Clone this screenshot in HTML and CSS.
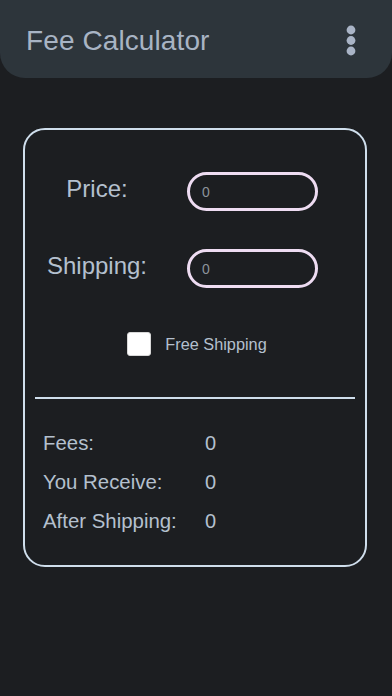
FILE: index.html
```html
<!DOCTYPE html>
<html>
<head>
<meta charset="utf-8">
<link rel="stylesheet" href="styles.css">
</head>
<body>
<header class="appbar">
  <h1 class="title">Fee Calculator</h1>
  <svg class="kebab" width="12" height="34" viewBox="0 0 12 34" aria-hidden="true">
    <circle cx="6" cy="6" r="4.4"/>
    <circle cx="6" cy="16.5" r="4.4"/>
    <circle cx="6" cy="27" r="4.4"/>
  </svg>
</header>
<main class="card">
  <div class="field-row">
    <label class="field-label">Price:</label>
    <input class="field-input" type="text" placeholder="0">
  </div>
  <div class="field-row">
    <label class="field-label">Shipping:</label>
    <input class="field-input" type="text" placeholder="0">
  </div>
  <div class="check-row">
    <span class="checkbox"></span>
    <span class="check-label">Free Shipping</span>
  </div>
  <hr class="divider">
  <div class="results">
    <span class="res-label">Fees:</span><span class="res-value">0</span>
    <span class="res-label">You Receive:</span><span class="res-value">0</span>
    <span class="res-label">After Shipping:</span><span class="res-value">0</span>
  </div>
</main>
</body>
</html>
```
FILE: styles.css
```css
html, body {
  margin: 0;
  padding: 0;
  background: #1c1e21;
  font-family: "Liberation Sans", Arial, sans-serif;
  color: #b4c0ce;
}
body {
  width: 392px;
  height: 696px;
  overflow: hidden;
}
.appbar {
  height: 78px;
  box-sizing: border-box;
  padding: 4px 35px 0 26px;
  background: #2d353b;
  border-bottom-left-radius: 25px;
  border-bottom-right-radius: 25px;
  display: flex;
  align-items: center;
  justify-content: space-between;
}
.title {
  margin: 0;
  font-size: 28px;
  font-weight: normal;
  color: #a8b4c4;
  letter-spacing: 0.1px;
}
.kebab {
  fill: #a9b4c6;
}
.card {
  margin: 50px 25px 0 23px;
  height: 439px;
  box-sizing: border-box;
  border: 2px solid #cfdeec;
  border-radius: 22px;
  padding: 42px 0 0 0;
  display: flex;
  flex-direction: column;
}
.field-row {
  display: grid;
  grid-template-columns: 144px 131px;
  column-gap: 18px;
  align-items: center;
  margin-bottom: 38px;
}
.field-row + .field-row {
  margin-bottom: 44px;
}
.field-label {
  justify-self: center;
  font-size: 24px;
  color: #b4c0ce;
  position: relative;
  top: -3px;
}
.field-input {
  box-sizing: border-box;
  width: 131px;
  height: 39px;
  border: 3px solid #eedcf2;
  border-radius: 20px;
  background: transparent;
  padding: 0 0 0 12px;
  font-family: "Liberation Sans", Arial, sans-serif;
  font-size: 14px;
  color: #8d939b;
  outline: none;
}
.field-input::placeholder {
  color: #8d939b;
}
.check-row {
  display: flex;
  align-items: center;
  justify-content: center;
  gap: 14px;
  padding-left: 4px;
  height: 24px;
}
.checkbox {
  width: 24px;
  height: 24px;
  box-sizing: border-box;
  background: #ffffff;
  border: 1px solid #d8d8d8;
  border-radius: 3px;
}
.check-label {
  font-size: 16.3px;
  color: #b4c0ce;
}
.divider {
  margin: 41px 10px 0 10px;
  border: none;
  height: 2px;
  background: #cfdeec;
}
.results {
  margin-top: 25px;
  padding-left: 18px;
  display: grid;
  grid-template-columns: 162px auto;
  grid-auto-rows: 39px;
  align-items: center;
  font-size: 20.4px;
  color: #b4c0ce;
}
.res-value {
  font-size: 20px;
}
```
